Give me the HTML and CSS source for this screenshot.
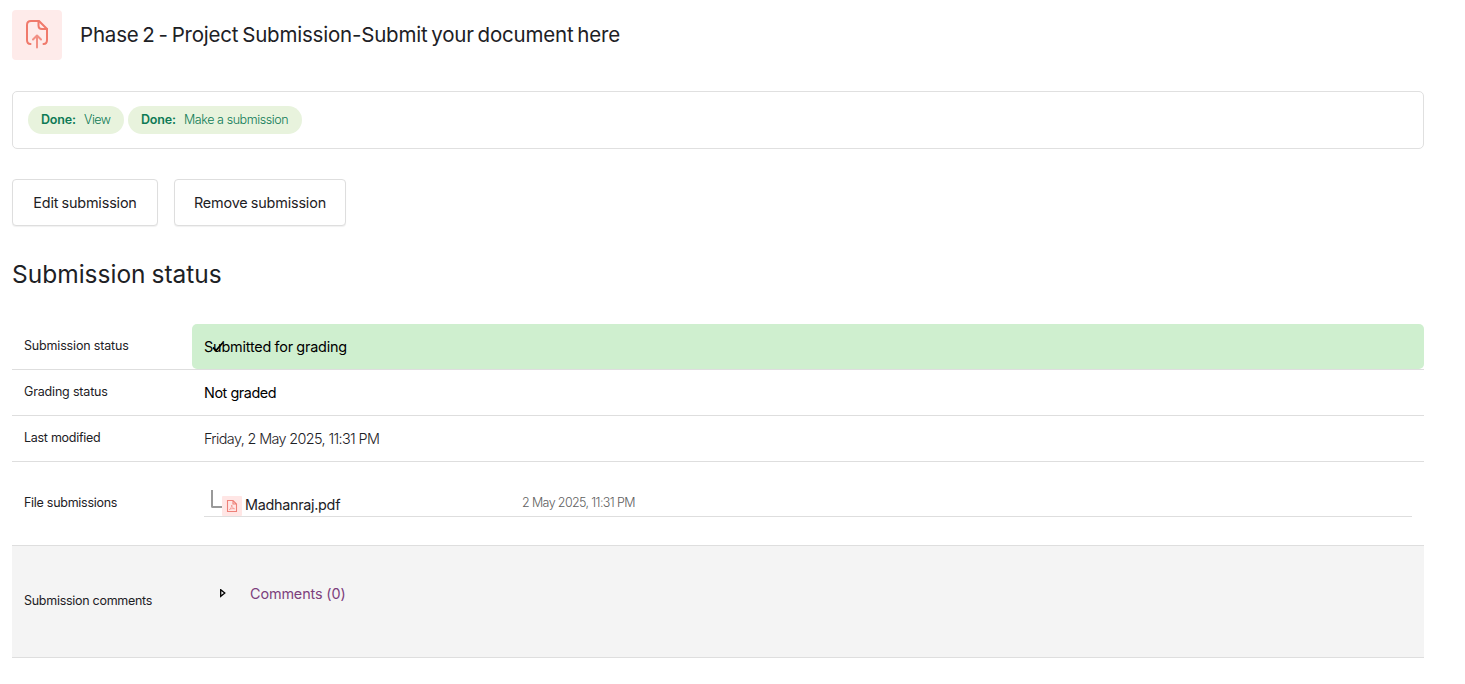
FILE: index.html
```html
<!DOCTYPE html>
<html lang="en">
<head>
<meta charset="utf-8">
<title>Phase 2 - Project Submission</title>
<link rel="stylesheet" href="styles.css">
</head>
<body>
<main class="page">
  <header class="activity">
    <span class="activity-icon">
      <svg width="50" height="50" viewBox="0 0 50 50" fill="none" stroke="#f0796b" stroke-width="2" stroke-linecap="round" stroke-linejoin="round">
        <path d="M18.500 34c-2.500 0-3.500-1.500-3.500-4V15c0-2.500 1.500-4 4-4h8l8 8v11c0 2.500-1 4-3.500 4"/>
        <path d="M26.500 11v4.500c0 2 1.500 3.500 3.500 3.500h5"/>
        <path d="M25 37.500V26M21 29.500l4-4 4 4" stroke="#f28f84"/>
      </svg>
    </span>
    <h1 class="activity-title">Phase 2 - Project Submission-Submit your document here</h1>
  </header>
  <section class="completion">
    <span class="badge badge-view"><strong>Done:</strong><span class="view">View</span></span>
    <span class="badge badge-submit"><strong>Done:</strong><span class="make">Make a submission</span></span>
  </section>
  <div class="actions">
    <button class="btn btn-edit">Edit submission</button>
    <button class="btn btn-remove">Remove submission</button>
  </div>
  <h2 class="section-title">Submission status</h2>
  <div class="status">
    <div class="row">
      <div class="label">Submission status</div>
      <div class="value submitted"><span class="submitted-text">Submitted for grading</span>
        <svg class="check" width="14" height="12" viewBox="0 0 14 12" fill="none" stroke="#000" stroke-width="1.800"><path d="M2 6.500l3 3L12 1.500"/></svg>
      </div>
    </div>
    <div class="row">
      <div class="label">Grading status</div>
      <div class="value"><span class="graded-text">Not graded</span></div>
    </div>
    <div class="row">
      <div class="label label-modified">Last modified</div>
      <div class="value"><span class="modified-text">Friday, 2 May 2025, 11:31 PM</span></div>
    </div>
    <div class="row row-files">
      <div class="label label-files">File submissions</div>
      <div class="value">
        <div class="file">
          <span class="elbow"></span>
          <svg class="pdf" width="20" height="20" viewBox="0 0 20 20" fill="none" stroke="#ee8078" stroke-width="1.100">
            <rect width="20" height="20" rx="1" fill="#ffe6e5" stroke="none"/>
            <path d="M5.500 4.500h5.500l3.500 3.500v7.500h-9zM11 4.500v3.500h3.500"/>
            <path d="M7.500 13.500c1.500-1.200 2.300-3 2.200-4.500.4 2 1.200 3.200 2.800 3.800-2-.4-3.500-.1-5 .7" stroke-width=".6"/>
          </svg>
          <span class="file-name">Madhanraj.pdf</span>
          <span class="file-date">2 May 2025, 11:31 PM</span>
        </div>
      </div>
    </div>
    <div class="row row-comments">
      <div class="label label-files">Submission comments</div>
      <div class="value">
        <svg class="caret" width="6" height="9" viewBox="0 0 6 9" fill="none" stroke="#000" stroke-width="1.300"><path d="M.7 .7v6.600L4.800 4z"/></svg>
        <a class="comments">Comments (0)</a>
      </div>
    </div>
  </div>
</main>
</body>
</html>
```
FILE: styles.css
```css
* { box-sizing: border-box; }
body { margin: 0; background: #fff; color: #1d2125; font-family: Inter, "Liberation Sans", sans-serif; font-size: 14.400px; }
.page { width: 1424px; padding: 10px 0 0 12px; }
.activity { display: flex; align-items: center; gap: 18px; height: 50px; }
.activity-icon { width: 50px; height: 50px; border-radius: 4px; background: #feebea; }
.activity-icon svg { display: block; }
.activity-title { margin: 0; font-size: 20.500px; font-weight: 400; line-height: 30px; letter-spacing: -.2px; word-spacing: -1.700px; white-space: nowrap; }
.completion { display: flex; align-items: center; gap: 4px; height: 58px; margin-top: 31px; padding: 0 15px; border: 1px solid #e0e0e0; border-radius: 5px; }
.badge { display: flex; align-items: center; height: 28px; padding: 0 0 1px 13px; border-radius: 14px; background: #e8f3dd; color: #0d7a55; font-size: 12.500px; white-space: nowrap; }
.badge strong { width: 43px; font-weight: 600; letter-spacing: -.2px; }
.badge-view { width: 96px; }
.badge-submit { width: 174px; }
.view { font-weight: 300; letter-spacing: -.5px; }
.make { font-weight: 300; letter-spacing: -.42px; }
.actions { display: flex; gap: 16px; margin-top: 30px; }
.btn { height: 47px; padding: 0; border: 1px solid #dedede; border-radius: 4px; background: #fff; color: #1d2125; font: inherit; letter-spacing: -.16px; word-spacing: -.700px; box-shadow: 0 1px 1px rgba(0,0,0,.06); white-space: nowrap; }
.btn-edit { width: 146px; }
.btn-remove { width: 172px; }
.section-title { margin: 30px 0 0; font-size: 24.500px; font-weight: 400; line-height: 36px; word-spacing: -1px; white-space: nowrap; }
.status { margin-top: 32px; }
.row { display: grid; grid-template-columns: 180px 1fr; height: 46px; border-bottom: 1px solid #dedede; white-space: nowrap; }
.label { display: flex; align-items: center; padding: 0 0 2px 12px; font-size: 12.500px; letter-spacing: -.17px; }
.label-modified, .label-files { letter-spacing: -.28px; }
.value { display: flex; align-items: center; padding: 0 12px 1px; }
.submitted { position: relative; border-radius: 5px; background: #cfefcf; color: #000; }
.submitted-text { letter-spacing: -.18px; word-spacing: -.500px; }
.check { position: absolute; left: 19px; top: 17px; }
.graded-text { color: #000; letter-spacing: -.45px; }
.modified-text { font-weight: 300; letter-spacing: -.62px; }
.row-files { height: 84px; }
.row-files .value { align-items: flex-start; padding-top: 28px; }
.file { display: flex; flex: 1; height: 27px; padding-left: 7px; border-bottom: 1px solid #dedede; }
.elbow { width: 11px; height: 18px; border: solid #999; border-width: 0 0 2px 2px; border-bottom-left-radius: 2px; }
.pdf { margin-top: 6px; }
.file-name { width: 280px; padding-left: 3px; line-height: 29px; letter-spacing: -.3px; }
.file-date { line-height: 26px; color: #606060; font-size: 12.500px; font-weight: 300; letter-spacing: -.62px; }
.row-comments { height: 112px; background: #f4f4f4; }
.row-comments .value { align-items: flex-start; padding: 43px 0 0 28px; }
.caret { flex: none; }
.comments { margin: -5px 0 0 24px; line-height: 20px; color: #7d3f7d; letter-spacing: -.12px; }
```
